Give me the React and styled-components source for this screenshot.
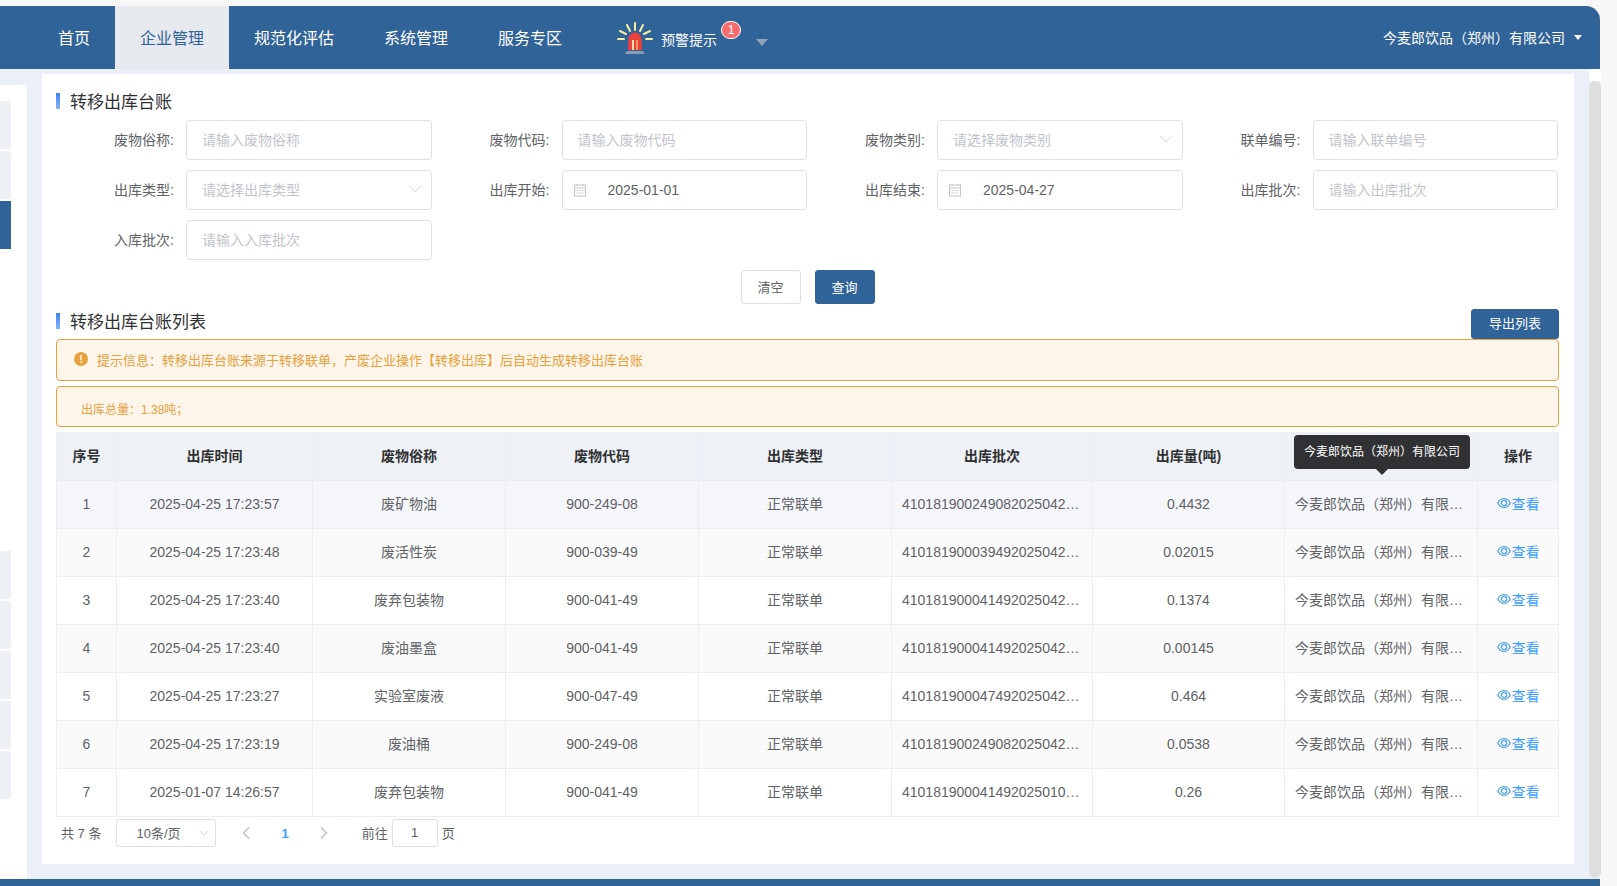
import React from "react";
import styled, { createGlobalStyle } from "styled-components";
import { ChevronDown, ChevronLeft, ChevronRight } from "lucide-react";

const BLUE = "#306398";
const PAGE_BG = "#ebf0f8";
const BORDER = "#ebeef5";

const GlobalStyle = createGlobalStyle`
  html, body {
    margin: 0;
    padding: 0;
    width: 100%;
    height: 100%;
    overflow: hidden;
    background: #f7f7f7;
    font-family: "Liberation Sans", "Noto Sans CJK SC", sans-serif;
  }
  * { box-sizing: border-box; }
`;

const Page = styled.div`
  display: flex;
  width: 1617px;
  height: 886px;
  overflow: hidden;
`;

const Frame = styled.div`
  display: flex;
  flex-direction: column;
  width: 1600px;
  padding-top: 6px;
`;

const Rail = styled.div`
  display: flex;
  flex-direction: column;
  align-items: flex-end;
  width: 17px;
  padding-top: 87px;
`;

const RailMark = styled.span`
  display: block;
  width: 5px;
  height: 1px;
  margin-bottom: 760px;
  background: #cfcfcf;
`;

const Header = styled.header`
  display: flex;
  align-items: center;
  height: 63px;
  padding: 0 18px 0 33px;
  background: ${BLUE};
  border-top-right-radius: 14px;
  color: #fff;
`;

const NavTab = styled.a`
  display: flex;
  align-items: center;
  height: 100%;
  padding: 0 25px 2px;
  font-size: 16px;
  color: ${(p) => (p.$active ? BLUE : "#fff")};
  background: ${(p) => (p.$active ? "#e6e9ee" : "transparent")};
`;

const WarnItem = styled.div`
  position: relative;
  display: flex;
  align-items: center;
  height: 100%;
  margin-left: 30px;
`;

const WarnText = styled.span`
  margin-left: 8px;
  padding-top: 3px;
  font-size: 14px;
`;

const Badge = styled.span`
  position: absolute;
  left: 104px;
  top: 15px;
  width: 20px;
  height: 18px;
  border: 1px solid #fff;
  border-radius: 10px;
  background: #f56c6c;
  color: #fff;
  font-size: 12px;
  line-height: 16px;
  text-align: center;
`;

const Caret = styled.span`
  width: 0;
  height: 0;
  border-left: ${(p) => p.$size}px solid transparent;
  border-right: ${(p) => p.$size}px solid transparent;
  border-top: ${(p) => p.$h}px solid ${(p) => p.$color};
`;

const WarnCaret = styled(Caret)`
  margin: 10px 0 0 39px;
`;

const Company = styled.div`
  display: flex;
  align-items: center;
  gap: 9px;
  margin-left: auto;
  font-size: 14px;
`;

const CompanyName = styled.span`
  padding-bottom: 2px;
`;

const Body = styled.div`
  display: flex;
  height: 810px;
  background: ${PAGE_BG};
`;

const Sidebar = styled.aside`
  display: flex;
  flex-direction: column;
  flex: 0 0 27px;
  margin-top: 16px;
  padding-top: 16px;
  background: #fff;
`;

const SideGroup = styled.div`
  display: flex;
  flex-direction: column;
  gap: 2px;
  margin-top: ${(p) => p.$top || 0}px;
`;

const SideItem = styled.div`
  width: 11px;
  height: 48px;
  background: ${(p) => (p.$active ? BLUE : "#edf0f5")};
`;

const Panel = styled.main`
  flex: 0 0 1531px;
  height: 790px;
  margin: 5px 0 0 15px;
  padding: 15px 15px 0 14px;
  background: #fff;
`;

const ScrollTrack = styled.div`
  flex: 0 0 12px;
  margin-left: 15px;
  padding-top: 12px;
  background: linear-gradient(#fff 12px, transparent 12px);
`;

const ScrollThumb = styled.div`
  height: 797px;
  border-radius: 6px;
  background: #dedede;
`;

const Footer = styled.footer`
  height: 7px;
  background: ${BLUE};
`;

const SectionTitle = styled.h2`
  display: flex;
  align-items: center;
  height: 24px;
  margin: 0;
  padding-bottom: 2px;
  font-size: 17px;
  font-weight: 400;
  color: #303133;

  &::before {
    content: "";
    width: 4px;
    height: 16px;
    margin: 2px 10px 0 0;
    background: linear-gradient(#3f82f0, #86b4fb);
  }
`;

const FormGrid = styled.div`
  display: grid;
  grid-template-columns: repeat(4, 375.5px);
  row-gap: 10px;
  margin-top: 7px;
`;

const Field = styled.div`
  display: flex;
  align-items: center;
  height: 40px;
`;

const Label = styled.label`
  flex: 0 0 130px;
  padding: 0 12px 2px 0;
  font-size: 14px;
  color: #606266;
  text-align: right;
`;

const InputBox = styled.div`
  display: flex;
  align-items: center;
  width: 245.5px;
  height: 40px;
  padding: 0 5px ${(p) => (p.$filled ? 0 : 2)}px 15px;
  border: 1px solid #dcdfe6;
  border-radius: 4px;
  background: #fff;
  font-size: 14px;
  color: ${(p) => (p.$filled ? "#606266" : "#c0c4cc")};
`;

const DateIcon = styled.svg`
  flex: 0 0 14px;
  width: 14px;
  height: 14px;
  margin: 0 21px 0 -5px;
`;

const SelectArrow = styled(ChevronDown)`
  margin-left: auto;
  color: #c0c4cc;
`;

const Actions = styled.div`
  display: flex;
  justify-content: center;
  gap: 14px;
  margin-top: 10px;
`;

const Button = styled.button`
  width: ${(p) => p.$w || 60}px;
  height: ${(p) => p.$h || 34}px;
  padding: 0 0 2px;
  border: 1px solid ${(p) => (p.$primary ? BLUE : "#dcdfe6")};
  border-radius: 3px;
  background: ${(p) => (p.$primary ? BLUE : "#fff")};
  color: ${(p) => (p.$primary ? "#fff" : "#606266")};
  font-family: inherit;
  font-size: 13px;
`;

const ExportButton = styled(Button)`
  padding-bottom: 4px;
`;

const ListHead = styled.div`
  display: flex;
  justify-content: space-between;
  align-items: flex-start;
  height: 30px;
  margin-top: 5px;
`;

const Alert = styled.div`
  display: flex;
  align-items: center;
  height: ${(p) => p.$h}px;
  margin-bottom: 5px;
  padding: ${(p) => p.$pad};
  border: 1px solid #e6a23c;
  border-radius: 4px;
  background: #fdf4ea;
  color: #e6a23c;
  font-size: ${(p) => p.$size}px;
`;

const AlertIcon = styled.span`
  flex: 0 0 14px;
  width: 14px;
  height: 14px;
  margin-right: 9px;
  border-radius: 50%;
  background: #e6a23c;
  color: #fdf4ea;
  font-size: 11px;
  font-weight: 700;
  line-height: 14px;
  text-align: center;
`;

const TableWrap = styled.div`
  position: relative;
`;

const Table = styled.table`
  width: 1502px;
  table-layout: fixed;
  border-collapse: separate;
  border-spacing: 0;
  border-left: 1px solid ${BORDER};
`;

const Th = styled.th`
  height: 49px;
  padding: 0 10px 2px;
  border-right: 1px solid ${BORDER};
  border-bottom: 1px solid ${BORDER};
  background: #eef1f6;
  color: #303133;
  font-size: 14px;
  font-weight: 700;
  text-align: center;
`;

const Td = styled.td`
  height: 48px;
  padding: 0 10px ${(p) => (p.$cjk ? 4 : 2)}px;
  border-right: 1px solid ${BORDER};
  border-bottom: 1px solid ${BORDER};
  background: ${(p) => p.$bg};
  color: #606266;
  font-size: 14px;
  text-align: center;
  white-space: nowrap;
  overflow: hidden;
  text-overflow: ellipsis;
`;

const ViewLink = styled.a`
  display: inline-flex;
  align-items: center;
  gap: 1px;
  color: #409eff;
`;

const Tooltip = styled.div`
  position: absolute;
  left: 1238px;
  top: 3px;
  width: 176px;
  height: 34px;
  border-radius: 4px;
  background: #303133;
  color: #fff;
  font-size: 12px;
  line-height: 34px;
  text-align: center;

  &::after {
    content: "";
    position: absolute;
    left: 82px;
    bottom: -6px;
    border-left: 6px solid transparent;
    border-right: 6px solid transparent;
    border-top: 6px solid #303133;
  }
`;

const Pager = styled.div`
  display: flex;
  align-items: center;
  height: 28px;
  margin-top: 2px;
  padding-left: 5px;
  font-size: 13px;
  color: #606266;
`;

const PagerText = styled.span`
  padding-bottom: 2px;
  margin-left: ${(p) => p.$left || 0}px;
`;

const PagerSelect = styled.div`
  display: flex;
  align-items: center;
  width: 100px;
  height: 28px;
  margin-left: 15px;
  padding: 0 3px 0 19px;
  border: 1px solid #dcdfe6;
  border-radius: 3px;
`;

const PagerArrow = styled.span`
  display: flex;
  color: #c0c4cc;
  margin-left: ${(p) => p.$left}px;
`;

const PagerCurrent = styled.span`
  margin-left: 25px;
  color: #409eff;
  font-weight: 700;
`;

const PagerInput = styled.div`
  width: 46px;
  height: 28px;
  margin: 0 4px;
  border: 1px solid #dcdfe6;
  border-radius: 3px;
  line-height: 26px;
  text-align: center;
`;

const AlarmIcon = () => (
  <svg width="36" height="32" viewBox="0 0 36 32">
    <g stroke="#f3eea0" strokeWidth="2" strokeLinecap="round">
      <line x1="18" y1="1" x2="18" y2="8" />
      <line x1="10" y1="3" x2="13" y2="9" />
      <line x1="26" y1="3" x2="23" y2="9" />
      <line x1="3" y1="9" x2="9" y2="12" />
      <line x1="33" y1="9" x2="27" y2="12" />
      <line x1="1" y1="17" x2="7" y2="17" />
      <line x1="35" y1="17" x2="29" y2="17" />
    </g>
    <path d="M11 28 L11.5 17 a6.5 6.5 0 0 1 13 0 L25 28 Z" fill="#e8423f" />
    <path d="M15 18 h2 v10 h-2 Z" fill="#f9e0a8" />
    <path d="M19 18 h2 v10 h-2 Z" fill="#f39a5a" />
    <path d="M8 32 L10 29 H26 L28 32 Z" fill="#8b9bb0" />
  </svg>
);

const CalendarIcon = () => (
  <DateIcon viewBox="0 0 14 14" fill="none" stroke="#c0c4cc">
    <rect x="1.5" y="2" width="11" height="11" />
    <path d="M1.5 5 H12.5 M4 1 V3 M10 1 V3" />
    <path d="M3.5 7.5 H10.5 M3.5 10 H10.5" strokeDasharray="1.5 1" />
  </DateIcon>
);

const EyeIcon = () => (
  <svg width="14" height="12" viewBox="0 0 14 12" fill="none" stroke="#409eff" strokeWidth="1.2">
    <path d="M0.7 6 C3 2.2 5 1.5 7 1.5 C9 1.5 11 2.2 13.3 6 C11 9.8 9 10.5 7 10.5 C5 10.5 3 9.8 0.7 6 Z" />
    <circle cx="7" cy="6" r="2.6" />
  </svg>
);

const navItems = ["规范化评估", "系统管理", "服务专区"];

const fields = [
  { label: "废物俗称:", text: "请输入废物俗称" },
  { label: "废物代码:", text: "请输入废物代码" },
  { label: "废物类别:", text: "请选择废物类别", select: true },
  { label: "联单编号:", text: "请输入联单编号" },
  { label: "出库类型:", text: "请选择出库类型", select: true },
  { label: "出库开始:", text: "2025-01-01", date: true },
  { label: "出库结束:", text: "2025-04-27", date: true },
  { label: "出库批次:", text: "请输入出库批次" },
  { label: "入库批次:", text: "请输入入库批次" },
];

const columns = [
  { title: "序号", width: 60 },
  { title: "出库时间", width: 196 },
  { title: "废物俗称", width: 193 },
  { title: "废物代码", width: 193 },
  { title: "出库类型", width: 193 },
  { title: "出库批次", width: 201 },
  { title: "出库量(吨)", width: 192 },
  { title: "", width: 193 },
  { title: "操作", width: 81 },
];

const rows = [
  ["2025-04-25 17:23:57", "废矿物油", "900-249-08", "4101819002490820250425001", "0.4432"],
  ["2025-04-25 17:23:48", "废活性炭", "900-039-49", "4101819000394920250425001", "0.02015"],
  ["2025-04-25 17:23:40", "废弃包装物", "900-041-49", "4101819000414920250425002", "0.1374"],
  ["2025-04-25 17:23:40", "废油墨盒", "900-041-49", "4101819000414920250425001", "0.00145"],
  ["2025-04-25 17:23:27", "实验室废液", "900-047-49", "4101819000474920250425001", "0.464"],
  ["2025-04-25 17:23:19", "废油桶", "900-249-08", "4101819002490820250425002", "0.0538"],
  ["2025-01-07 14:26:57", "废弃包装物", "900-041-49", "4101819000414920250107001", "0.26"],
];

const rowBg = (i) => {
  if (i === 0) return "#f4f6fa";
  return i % 2 === 1 ? "#fafafa" : "#fff";
};

export default function App() {
  return (
    <Page>
      <GlobalStyle />
      <Frame>
        <Header>
          <NavTab>首页</NavTab>
          <NavTab $active>企业管理</NavTab>
          {navItems.map((n) => (
            <NavTab key={n}>{n}</NavTab>
          ))}
          <WarnItem>
            <AlarmIcon />
            <WarnText>预警提示</WarnText>
            <Badge>1</Badge>
            <WarnCaret $size={6} $h={7} $color="#8fa3b9" />
          </WarnItem>
          <Company>
            <CompanyName>今麦郎饮品（郑州）有限公司</CompanyName>
            <Caret $size={4} $h={5} $color="#fff" />
          </Company>
        </Header>

        <Body>
          <Sidebar>
            <SideGroup>
              <SideItem />
              <SideItem />
              <SideItem $active />
            </SideGroup>
            <SideGroup $top={302}>
              <SideItem />
              <SideItem />
              <SideItem />
              <SideItem />
              <SideItem />
            </SideGroup>
          </Sidebar>

          <Panel>
            <SectionTitle>转移出库台账</SectionTitle>
            <FormGrid>
              {fields.map((f) => (
                <Field key={f.label}>
                  <Label>{f.label}</Label>
                  <InputBox $filled={f.date}>
                    {f.date && <CalendarIcon />}
                    {f.text}
                    {f.select && <SelectArrow size={22} strokeWidth={0.8} />}
                  </InputBox>
                </Field>
              ))}
            </FormGrid>
            <Actions>
              <Button>清空</Button>
              <Button $primary>查询</Button>
            </Actions>

            <ListHead>
              <SectionTitle>转移出库台账列表</SectionTitle>
              <ExportButton $primary $w={88} $h={30}>导出列表</ExportButton>
            </ListHead>
            <Alert $h={42} $pad="0 0 2px 17px" $size={13}>
              <AlertIcon>!</AlertIcon>
              提示信息：转移出库台账来源于转移联单，产废企业操作【转移出库】后自动生成转移出库台账
            </Alert>
            <Alert $h={41} $pad="3px 0 0 24px" $size={12}>
              出库总量：1.38吨；
            </Alert>

            <TableWrap>
              <Table>
                <colgroup>
                  {columns.map((c, i) => (
                    <col key={i} style={{ width: c.width }} />
                  ))}
                </colgroup>
                <thead>
                  <tr>
                    {columns.map((c, i) => (
                      <Th key={i}>{c.title}</Th>
                    ))}
                  </tr>
                </thead>
                <tbody>
                  {rows.map((r, i) => (
                    <tr key={i}>
                      <Td $bg={rowBg(i)}>{i + 1}</Td>
                      <Td $bg={rowBg(i)}>{r[0]}</Td>
                      <Td $bg={rowBg(i)} $cjk>{r[1]}</Td>
                      <Td $bg={rowBg(i)}>{r[2]}</Td>
                      <Td $bg={rowBg(i)} $cjk>正常联单</Td>
                      <Td $bg={rowBg(i)}>{r[3]}</Td>
                      <Td $bg={rowBg(i)}>{r[4]}</Td>
                      <Td $bg={rowBg(i)} $cjk>今麦郎饮品（郑州）有限公司</Td>
                      <Td $bg={rowBg(i)} $cjk>
                        <ViewLink>
                          <EyeIcon />
                          查看
                        </ViewLink>
                      </Td>
                    </tr>
                  ))}
                </tbody>
              </Table>
              <Tooltip>今麦郎饮品（郑州）有限公司</Tooltip>
            </TableWrap>

            <Pager>
              <PagerText>共 7 条</PagerText>
              <PagerSelect>
                <PagerText>10条/页</PagerText>
                <SelectArrow size={16} strokeWidth={1} />
              </PagerSelect>
              <PagerArrow $left={20}>
                <ChevronLeft size={20} />
              </PagerArrow>
              <PagerCurrent>1</PagerCurrent>
              <PagerArrow $left={25}>
                <ChevronRight size={20} />
              </PagerArrow>
              <PagerText $left={28}>前往</PagerText>
              <PagerInput>1</PagerInput>
              <PagerText>页</PagerText>
            </Pager>
          </Panel>

          <ScrollTrack>
            <ScrollThumb />
          </ScrollTrack>
        </Body>
        <Footer />
      </Frame>
      <Rail>
        <RailMark />
        <RailMark />
      </Rail>
    </Page>
  );
}
